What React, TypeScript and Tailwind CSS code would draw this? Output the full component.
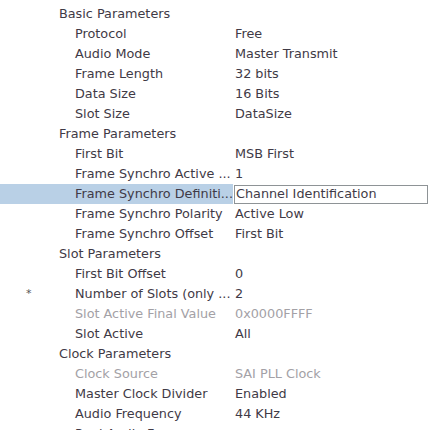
import React from 'react';

type Row = {
  label: string;
  value?: string;
  group?: boolean;
  disabled?: boolean;
  marked?: boolean;
  selected?: boolean;
};

// labels are elided the way the tree view shows them
const rows: Row[] = [
  { label: 'Basic Parameters', group: true },
  { label: 'Protocol', value: 'Free' },
  { label: 'Audio Mode', value: 'Master Transmit' },
  { label: 'Frame Length', value: '32 bits' },
  { label: 'Data Size', value: '16 Bits' },
  { label: 'Slot Size', value: 'DataSize' },
  { label: 'Frame Parameters', group: true },
  { label: 'First Bit', value: 'MSB First' },
  { label: 'Frame Synchro Active ...', value: '1' },
  { label: 'Frame Synchro Definiti...', value: 'Channel Identification', selected: true },
  { label: 'Frame Synchro Polarity', value: 'Active Low' },
  { label: 'Frame Synchro Offset', value: 'First Bit' },
  { label: 'Slot Parameters', group: true },
  { label: 'First Bit Offset', value: '0' },
  { label: 'Number of Slots (only ...', value: '2', marked: true },
  { label: 'Slot Active Final Value', value: '0x0000FFFF', disabled: true },
  { label: 'Slot Active', value: 'All' },
  { label: 'Clock Parameters', group: true },
  { label: 'Clock Source', value: 'SAI PLL Clock', disabled: true },
  { label: 'Master Clock Divider', value: 'Enabled' },
  { label: 'Audio Frequency', value: '44 KHz' },
  { label: 'Real Audio Frequency', value: '' },
];

export default function App() {
  return (
    <div className="min-h-screen bg-white pt-[4px] text-[12.8px] text-[#3f3a46]" style={{ fontFamily: '"DejaVu Sans", sans-serif' }}>
      {rows.map((r, i) => (
        <div key={i} className="flex h-5 items-center">
          <div className={`flex h-full w-[233px] shrink-0 items-center ${r.selected ? 'bg-[#b9d0e6]' : ''}`}>
            <span className="w-[59px] shrink-0 pl-[26px] text-[11px] text-[#555]">{r.marked ? '*' : ''}</span>
            {r.group ? (
              <span className="whitespace-nowrap">{r.label}</span>
            ) : (
              <span className={`whitespace-nowrap pl-4 ${r.disabled ? 'text-[#a3a1a6]' : ''}`}>{r.label}</span>
            )}
          </div>
          {r.selected ? (
            <div className="ml-px flex h-[19px] flex-1 items-center border border-[#8e9396] bg-white pl-[1px]">{r.value}</div>
          ) : (
            <div className={`pl-[2px] ${r.disabled ? 'text-[#a3a1a6]' : ''}`}>{r.value}</div>
          )}
        </div>
      ))}
    </div>
  );
}
